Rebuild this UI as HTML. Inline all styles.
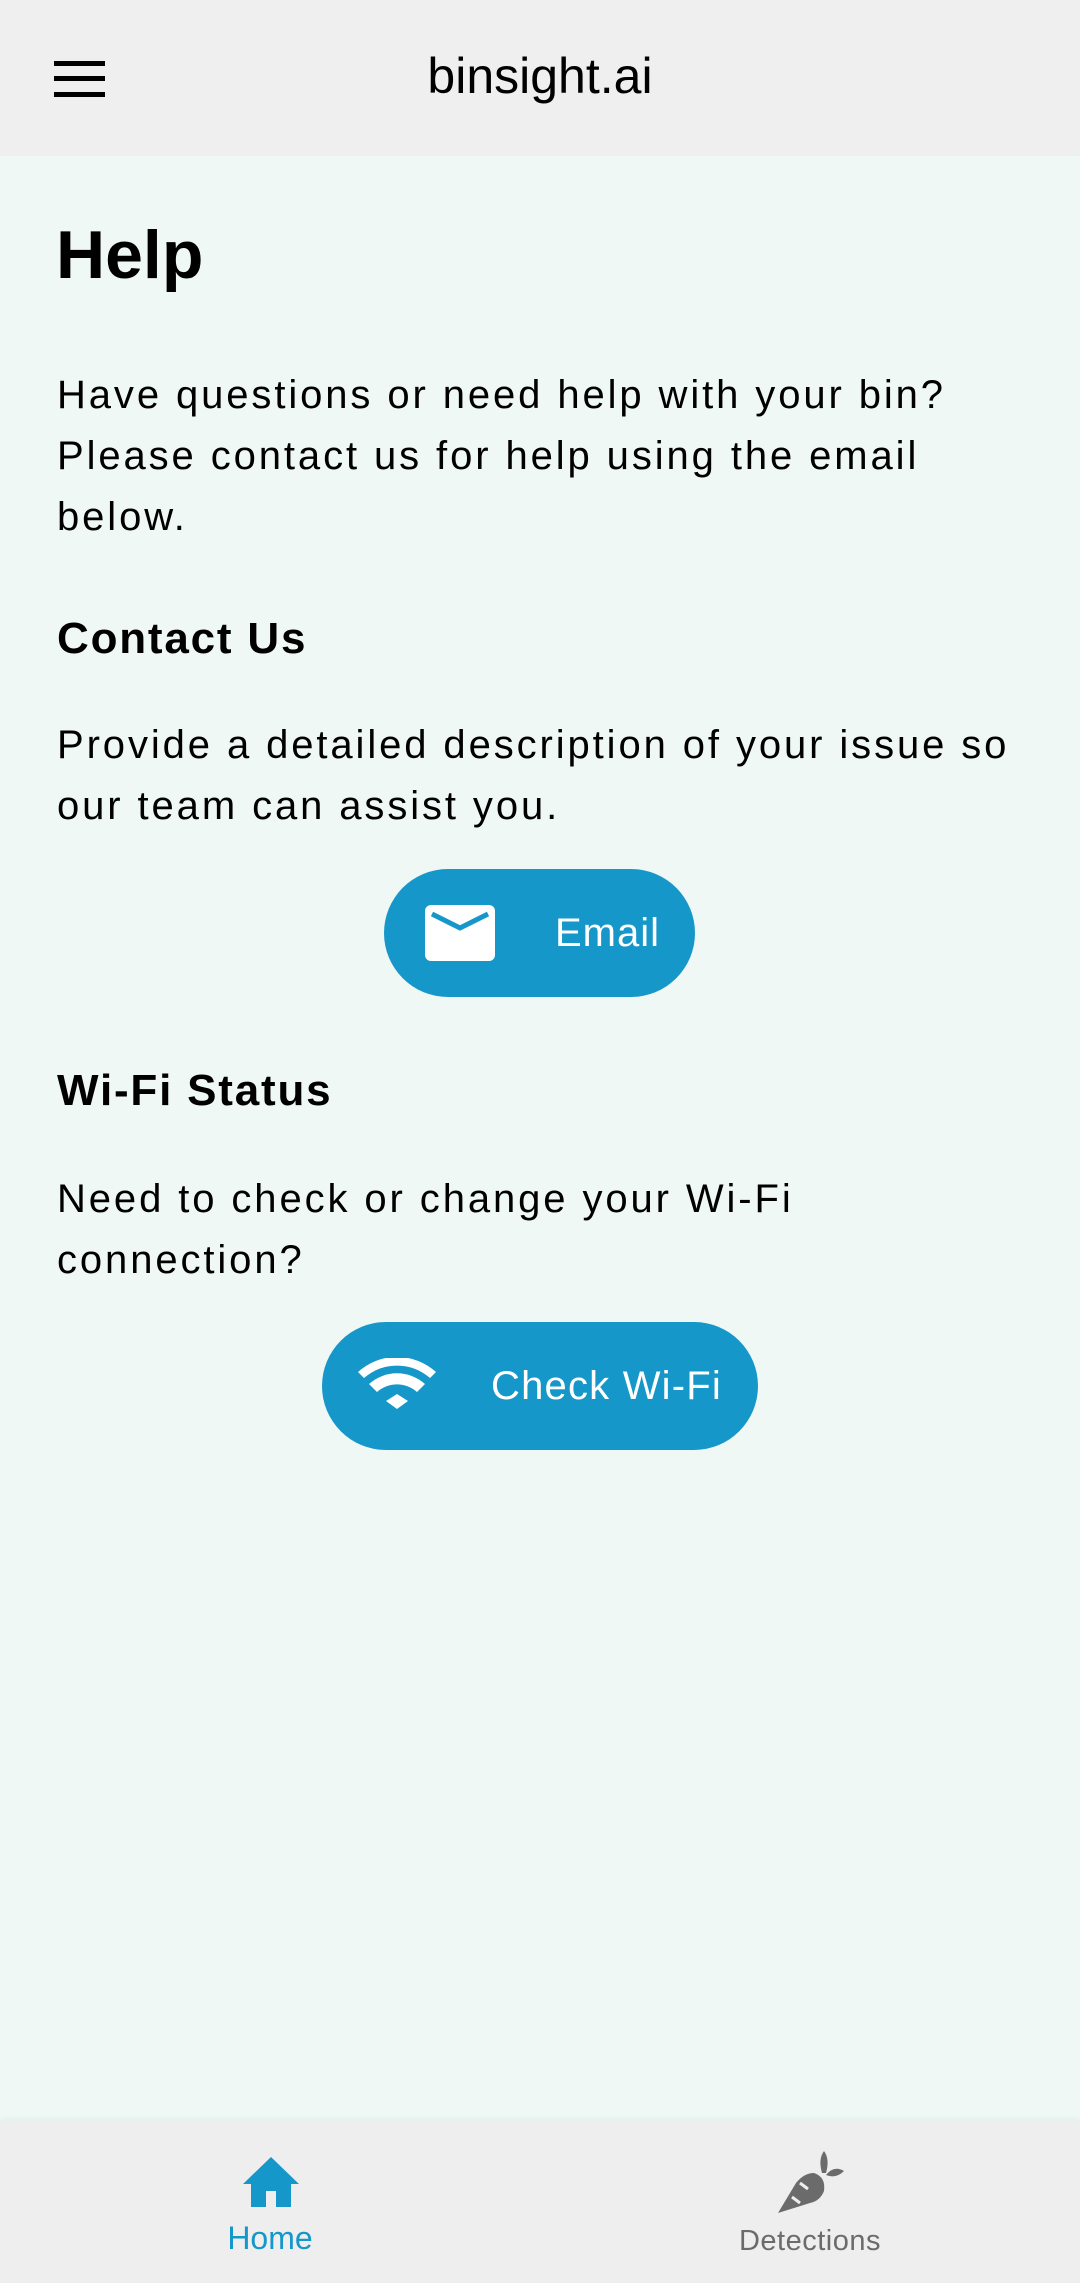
<!DOCTYPE html>
<html><head><meta charset="utf-8"><style>
*{margin:0;padding:0;box-sizing:border-box}
body{width:1080px;height:2283px;background:#eff8f4;font-family:"Liberation Sans",sans-serif;position:relative;overflow:hidden;color:#000}
.hdr{position:absolute;left:0;top:0;width:1080px;height:156px;background:#efefef}
.t{position:absolute;white-space:nowrap}
.p{font-size:40px;letter-spacing:2.9px;left:57px}
.h2{font-size:44px;font-weight:bold;letter-spacing:1.8px;left:57px}
.btn{position:absolute;background:#1697c9;border-radius:64px;height:128px}
.nav{position:absolute;left:0;top:2121px;width:1080px;height:162px;background:#eeeeee;box-shadow:0 -2px 6px rgba(0,0,0,0.05)}
</style></head><body>
<div class="hdr">
<svg style="position:absolute;left:54px;top:61px" width="51" height="36"><rect x="0" y="0" width="51" height="5" fill="#000"/><rect x="0" y="15" width="51" height="5" fill="#000"/><rect x="0" y="31" width="51" height="5" fill="#000"/></svg>
<div class="t" style="left:0;width:1080px;text-align:center;top:46px;font-size:50px;line-height:60px">binsight.ai</div>
</div>
<div class="t" style="left:56px;top:215px;font-size:68px;font-weight:bold;line-height:80px">Help</div>
<div class="t p" style="top:365px;line-height:61px">Have questions or need help with your bin?<br>Please contact us for help using the email<br>below.</div>
<div class="t h2" style="top:609px;line-height:60px">Contact Us</div>
<div class="t p" style="top:715px;line-height:61px">Provide a detailed description of your issue so<br>our team can assist you.</div>
<div class="btn" style="left:384px;top:869px;width:311px">
<svg style="position:absolute;left:41px;top:36px" width="70" height="56"><rect x="0" y="0" width="70" height="56" rx="6" fill="#fff"/><path d="M7 9 L35 23 L63 9" stroke="#1697c9" stroke-width="5" fill="none"/></svg>
<div class="t" style="left:171px;top:34px;font-size:40px;line-height:60px;color:#fff;letter-spacing:1px">Email</div>
</div>
<div class="t h2" style="top:1061px;line-height:60px">Wi-Fi Status</div>
<div class="t p" style="top:1169px;line-height:61px">Need to check or change your Wi-Fi<br>connection?</div>
<div class="btn" style="left:322px;top:1322px;width:436px">
<svg style="position:absolute;left:36px;top:36px" width="80" height="58" viewBox="0 0 80 58"><path d="M0 14 A58 58 0 0 1 78 14 L72 20 A50 50 0 0 0 6 20 Z" fill="#fff"/><path d="M11 26 A42 42 0 0 1 67 26 L59 34 A30 30 0 0 0 19 34 Z" fill="#fff"/><path d="M28 43 L39 36 L50 43 L39 51 Z" fill="#fff"/></svg>
<div class="t" style="left:169px;top:34px;font-size:40px;line-height:60px;color:#fff;letter-spacing:1.2px">Check Wi-Fi</div>
</div>
<div class="nav">
<svg style="position:absolute;left:243px;top:36px" width="56" height="50"><path d="M28 0 L56 27 L48 27 L48 50 L33 50 L33 34 L23 34 L23 50 L8 50 L8 27 L0 27 Z" fill="#1697c9"/></svg>
<div class="t" style="left:170px;width:200px;text-align:center;top:97px;font-size:32px;color:#1697c9;line-height:40px">Home</div>
<svg style="position:absolute;left:770px;top:24px" width="80" height="72" viewBox="0 0 80 72"><path d="M8 68 L26 38 Q34 28 44 28 Q56 32 54 46 Q50 56 40 58 Z" fill="#6b6b6b"/><path d="M52 28 Q48 14 54 6 Q60 14 56 28 Z" fill="#6b6b6b"/><path d="M56 30 Q64 20 74 26 Q66 34 56 30 Z" fill="#6b6b6b"/><path d="M30 38 L38 44 M22 52 L30 58" stroke="#eee" stroke-width="3"/></svg>
<div class="t" style="left:710px;width:200px;text-align:center;top:100px;font-size:29px;color:#6b6b6b;line-height:40px;letter-spacing:0.5px">Detections</div>
</div>
</body></html>
